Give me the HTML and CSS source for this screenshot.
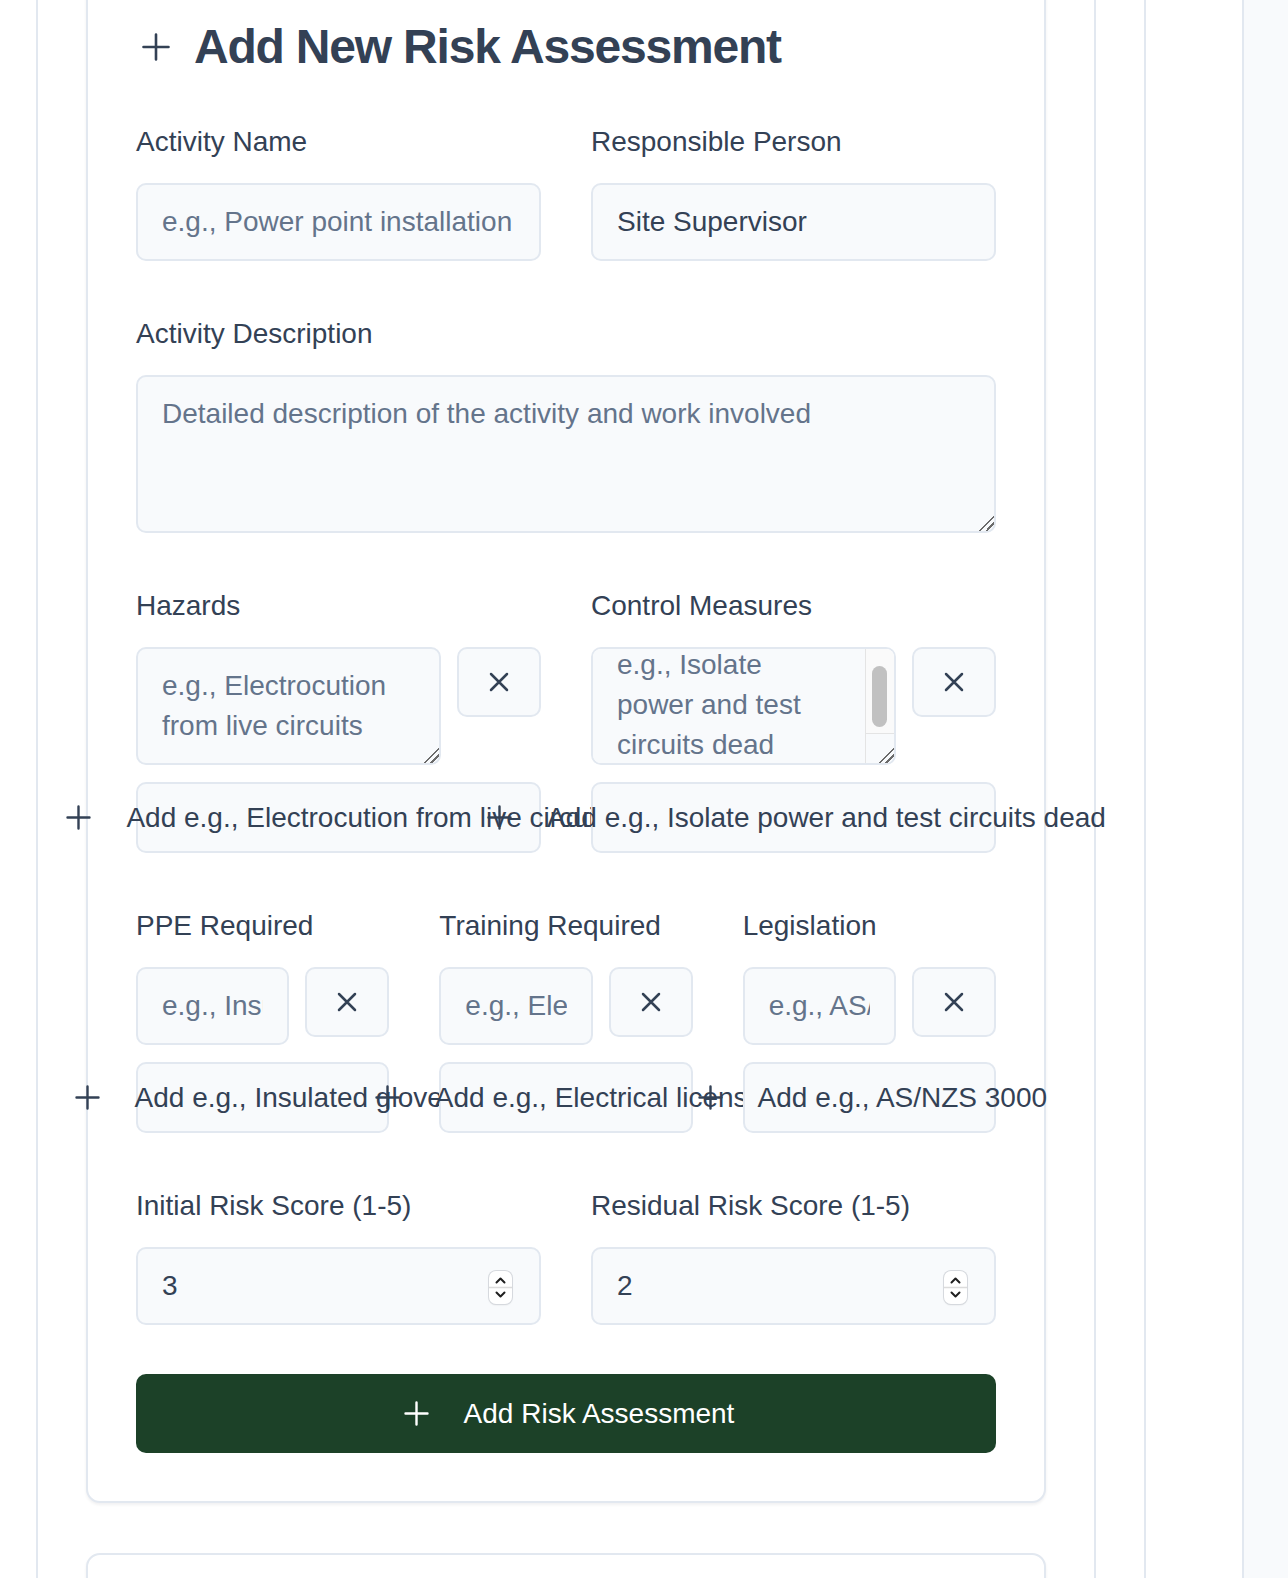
FILE: index.html
```html
<!DOCTYPE html>
<html lang="en">
<head>
<meta charset="utf-8">
<title>Add New Risk Assessment</title>
<link rel="stylesheet" href="styles.css">
</head>
<body>
<div class="shell">
  <div class="content">
    <div class="outer">
      <main class="inner">
        <section class="card form-card">
          <h2 class="card-title">
            <svg class="title-icon" viewBox="0 0 28 28" aria-hidden="true"><path d="M14 1.5v25M1.5 14h25"/></svg>
            <span>Add New Risk Assessment</span>
          </h2>

          <div class="grid-2 block">
            <div class="field">
              <label class="label" for="activity-name">Activity Name</label>
              <input class="control" id="activity-name" type="text" placeholder="e.g., Power point installation">
            </div>
            <div class="field">
              <label class="label" for="responsible">Responsible Person</label>
              <input class="control" id="responsible" type="text" value="Site Supervisor">
            </div>
          </div>

          <div class="field block">
            <label class="label" for="description">Activity Description</label>
            <textarea class="control desc" id="description" rows="3" placeholder="Detailed description of the activity and work involved"></textarea>
          </div>

          <div class="grid-2 block">
            <div class="field">
              <label class="label" for="hazard-0">Hazards</label>
              <div class="item-row">
                <textarea class="control area-sm" id="hazard-0" rows="2" placeholder="e.g., Electrocution from live circuits"></textarea>
                <button class="icon-btn" type="button" aria-label="Remove"><svg class="x-icon" viewBox="0 0 20 20"><path d="M2 2l16 16M18 2L2 18"/></svg></button>
              </div>
              <button class="add-btn" type="button"><svg class="plus-sm" viewBox="0 0 37 37"><path d="M18.5 7.5v22M7.5 18.5h22"/></svg><span>Add e.g., Electrocution from live circuits</span></button>
            </div>
            <div class="field">
              <label class="label" for="control-0">Control Measures</label>
              <div class="item-row">
                <div class="cm-wrap">
                  <textarea class="control area-sm cm" id="control-0" rows="2" placeholder="e.g., Isolate power and test circuits dead"></textarea>
                  <span class="scroll-track" aria-hidden="true"><span class="scroll-thumb"></span></span>
                  <span class="scroll-corner" aria-hidden="true"></span>
                </div>
                <button class="icon-btn" type="button" aria-label="Remove"><svg class="x-icon" viewBox="0 0 20 20"><path d="M2 2l16 16M18 2L2 18"/></svg></button>
              </div>
              <button class="add-btn" type="button"><svg class="plus-sm" viewBox="0 0 37 37"><path d="M18.5 7.5v22M7.5 18.5h22"/></svg><span>Add e.g., Isolate power and test circuits dead</span></button>
            </div>
          </div>

          <div class="grid-3 block">
            <div class="field">
              <label class="label" for="ppe-0">PPE Required</label>
              <div class="item-row">
                <input class="control" id="ppe-0" type="text" placeholder="e.g., Insulated gloves">
                <button class="icon-btn" type="button" aria-label="Remove"><svg class="x-icon" viewBox="0 0 20 20"><path d="M2 2l16 16M18 2L2 18"/></svg></button>
              </div>
              <button class="add-btn" type="button"><svg class="plus-sm" viewBox="0 0 37 37"><path d="M18.5 7.5v22M7.5 18.5h22"/></svg><span>Add e.g., Insulated gloves</span></button>
            </div>
            <div class="field">
              <label class="label" for="training-0">Training Required</label>
              <div class="item-row">
                <input class="control" id="training-0" type="text" placeholder="e.g., Electrical license">
                <button class="icon-btn" type="button" aria-label="Remove"><svg class="x-icon" viewBox="0 0 20 20"><path d="M2 2l16 16M18 2L2 18"/></svg></button>
              </div>
              <button class="add-btn" type="button"><svg class="plus-sm" viewBox="0 0 37 37"><path d="M18.5 7.5v22M7.5 18.5h22"/></svg><span>Add e.g., Electrical license</span></button>
            </div>
            <div class="field">
              <label class="label" for="legislation-0">Legislation</label>
              <div class="item-row">
                <input class="control" id="legislation-0" type="text" placeholder="e.g., AS/NZS 3000">
                <button class="icon-btn" type="button" aria-label="Remove"><svg class="x-icon" viewBox="0 0 20 20"><path d="M2 2l16 16M18 2L2 18"/></svg></button>
              </div>
              <button class="add-btn" type="button"><svg class="plus-sm" viewBox="0 0 37 37"><path d="M18.5 7.5v22M7.5 18.5h22"/></svg><span>Add e.g., AS/NZS 3000</span></button>
            </div>
          </div>

          <div class="grid-2 block-last">
            <div class="field">
              <label class="label" for="initial-risk">Initial Risk Score (1-5)</label>
              <div class="num-wrap">
                <input class="control num" id="initial-risk" type="number" min="1" max="5" value="3">
                <span class="spin" aria-hidden="true"><svg viewBox="0 0 23 33"><path class="spin-line" d="M0 16.5h23"/><path class="chev" d="M7.5 11.5l4-4 4 4M7.5 21.5l4 4 4-4"/></svg></span>
              </div>
            </div>
            <div class="field">
              <label class="label" for="residual-risk">Residual Risk Score (1-5)</label>
              <div class="num-wrap">
                <input class="control num" id="residual-risk" type="number" min="1" max="5" value="2">
                <span class="spin" aria-hidden="true"><svg viewBox="0 0 23 33"><path class="spin-line" d="M0 16.5h23"/><path class="chev" d="M7.5 11.5l4-4 4 4M7.5 21.5l4 4 4-4"/></svg></span>
              </div>
            </div>
          </div>

          <button class="submit" type="button"><svg class="plus-sm" viewBox="0 0 37 37"><path d="M18.5 7.5v22M7.5 18.5h22"/></svg><span>Add Risk Assessment</span></button>
        </section>

        <section class="card next-card"></section>
      </main>
    </div>
  </div>
  <aside class="sidebar"></aside>
</div>
<script src="script.js"></script>
</body>
</html>
```

FILE: styles.css
```css
* { box-sizing: border-box; }

html, body {
  margin: 0;
  padding: 0;
}

body {
  font-family: "Liberation Sans", Arial, Helvetica, sans-serif;
  color: #334155;
  background: #ffffff;
}

.shell {
  display: flex;
  height: 100vh;
  overflow: hidden;
}

.content {
  width: 1244px;
  flex: none;
  display: flex;
  padding-left: 36px;
  border-right: 2px solid #e2e8f0;
  background: #ffffff;
}

.outer {
  width: 1110px;
  flex: none;
  display: flex;
  border-left: 2px solid #e2e8f0;
  border-right: 2px solid #e2e8f0;
}

.inner {
  width: 1058px;
  flex: none;
  padding: 0 48px;
  border-right: 2px solid #e2e8f0;
}

.sidebar {
  flex: 1;
  background: #f8fafc;
}

.card {
  background: #ffffff;
  border: 2px solid #e2e8f0;
  border-radius: 14px;
  box-shadow: 0 2px 3px rgba(15, 23, 42, 0.06);
  padding: 48px;
}

.form-card {
  margin-top: -31px;
  margin-bottom: 50px;
}

.next-card {
  height: 200px;
}

.card-title {
  display: flex;
  align-items: center;
  gap: 24px;
  margin: 0 0 46px;
  font-size: 48px;
  line-height: 56px;
  font-weight: 700;
  letter-spacing: -1.2px;
  color: #334155;
}

.title-icon {
  width: 28px;
  height: 28px;
  margin-left: 6px;
  flex: none;
  fill: none;
  stroke: #334155;
  stroke-width: 2.6;
  stroke-linecap: round;
}

.block { margin-bottom: 52px; }
.block-last { margin-bottom: 49px; }

.grid-2 {
  display: grid;
  grid-template-columns: 1fr 1fr;
  column-gap: 50px;
}

.grid-3 {
  display: grid;
  grid-template-columns: 1fr 1fr 1fr;
  column-gap: 50px;
}

.field {
  display: flex;
  flex-direction: column;
  min-width: 0;
}

.label {
  display: block;
  font-size: 28px;
  line-height: 42px;
  margin-bottom: 20px;
  color: #334155;
}

.control {
  display: block;
  width: 100%;
  margin: 0;
  font-family: inherit;
  font-size: 28px;
  line-height: 40px;
  padding: 17px 24px;
  color: #334155;
  background: #f8fafc;
  border: 2px solid #e2e8f0;
  border-radius: 10px;
  outline: none;
}

.control::placeholder {
  color: #64748b;
  opacity: 1;
}

input.control { height: 78px; }

textarea.control { resize: vertical; }

textarea.control::-webkit-resizer {
  background: linear-gradient(135deg,
    transparent 0 48%,
    #6b6b6b 48% 56%,
    transparent 56% 70%,
    #6b6b6b 70% 78%,
    transparent 78%);
}

.desc { height: 158px; }
.area-sm { height: 118px; }

.item-row {
  display: flex;
  align-items: flex-start;
  gap: 16px;
}

.item-row > .control {
  flex: 1;
  min-width: 0;
}

.cm-wrap {
  position: relative;
  flex: 1;
  min-width: 0;
}

.cm {
  padding-right: 54px;
}

.scroll-track {
  position: absolute;
  top: 2px;
  right: 2px;
  width: 29px;
  height: 84px;
  background: #fafafa;
  border-left: 1px solid #e4e4e4;
  border-top-right-radius: 8px;
  pointer-events: none;
}

.scroll-thumb {
  position: absolute;
  top: 17px;
  left: 6px;
  width: 15px;
  height: 61px;
  border-radius: 8px;
  background: #c1c1c1;
}

.scroll-corner {
  position: absolute;
  right: 2px;
  bottom: 2px;
  width: 29px;
  height: 30px;
  border-left: 1px solid #e4e4e4;
  border-top: 1px solid #e4e4e4;
  pointer-events: none;
}

.icon-btn {
  flex: none;
  width: 84px;
  height: 70px;
  padding: 0;
  display: flex;
  align-items: center;
  justify-content: center;
  background: #f8fafc;
  border: 2px solid #e2e8f0;
  border-radius: 10px;
  color: #334155;
}

.x-icon {
  width: 20px;
  height: 20px;
  fill: none;
  stroke: #334155;
  stroke-width: 2.5;
  stroke-linecap: round;
}

.add-btn {
  margin-top: 17px;
  width: 100%;
  height: 71px;
  padding: 0;
  display: flex;
  align-items: center;
  justify-content: center;
  gap: 29px;
  white-space: nowrap;
  font-family: inherit;
  font-size: 28px;
  color: #334155;
  background: #f8fafc;
  border: 2px solid #e2e8f0;
  border-radius: 10px;
}

.plus-sm {
  flex: none;
  width: 37px;
  height: 37px;
  fill: none;
  stroke: currentColor;
  stroke-width: 2.4;
  stroke-linecap: round;
}

.num-wrap {
  position: relative;
}

.num { -moz-appearance: textfield; }
.num::-webkit-inner-spin-button,
.num::-webkit-outer-spin-button {
  -webkit-appearance: none;
  margin: 0;
}

.spin {
  position: absolute;
  top: 24px;
  right: 29px;
  width: 23px;
  height: 33px;
  border-radius: 7px;
  background: #ffffff;
  box-shadow: 0 0 0 1px #d6d9de, 0 1px 2px rgba(0, 0, 0, 0.12);
  overflow: hidden;
}

.spin svg {
  display: block;
  width: 23px;
  height: 33px;
}

.spin-line {
  stroke: #dcdcdc;
  stroke-width: 1.5;
}

.chev {
  fill: none;
  stroke: #1f1f1f;
  stroke-width: 2;
  stroke-linecap: round;
  stroke-linejoin: round;
}

.submit {
  width: 100%;
  height: 79px;
  padding: 0;
  display: flex;
  align-items: center;
  justify-content: center;
  gap: 29px;
  font-family: inherit;
  font-size: 28px;
  color: #ffffff;
  background: #1c4128;
  border: none;
  border-radius: 10px;
}
```

FILE: script.js
```js
document.addEventListener('DOMContentLoaded', function () {
  var area = document.querySelector('.cm');
  if (area) {
    area.scrollTop = 21;
  }
});
```
